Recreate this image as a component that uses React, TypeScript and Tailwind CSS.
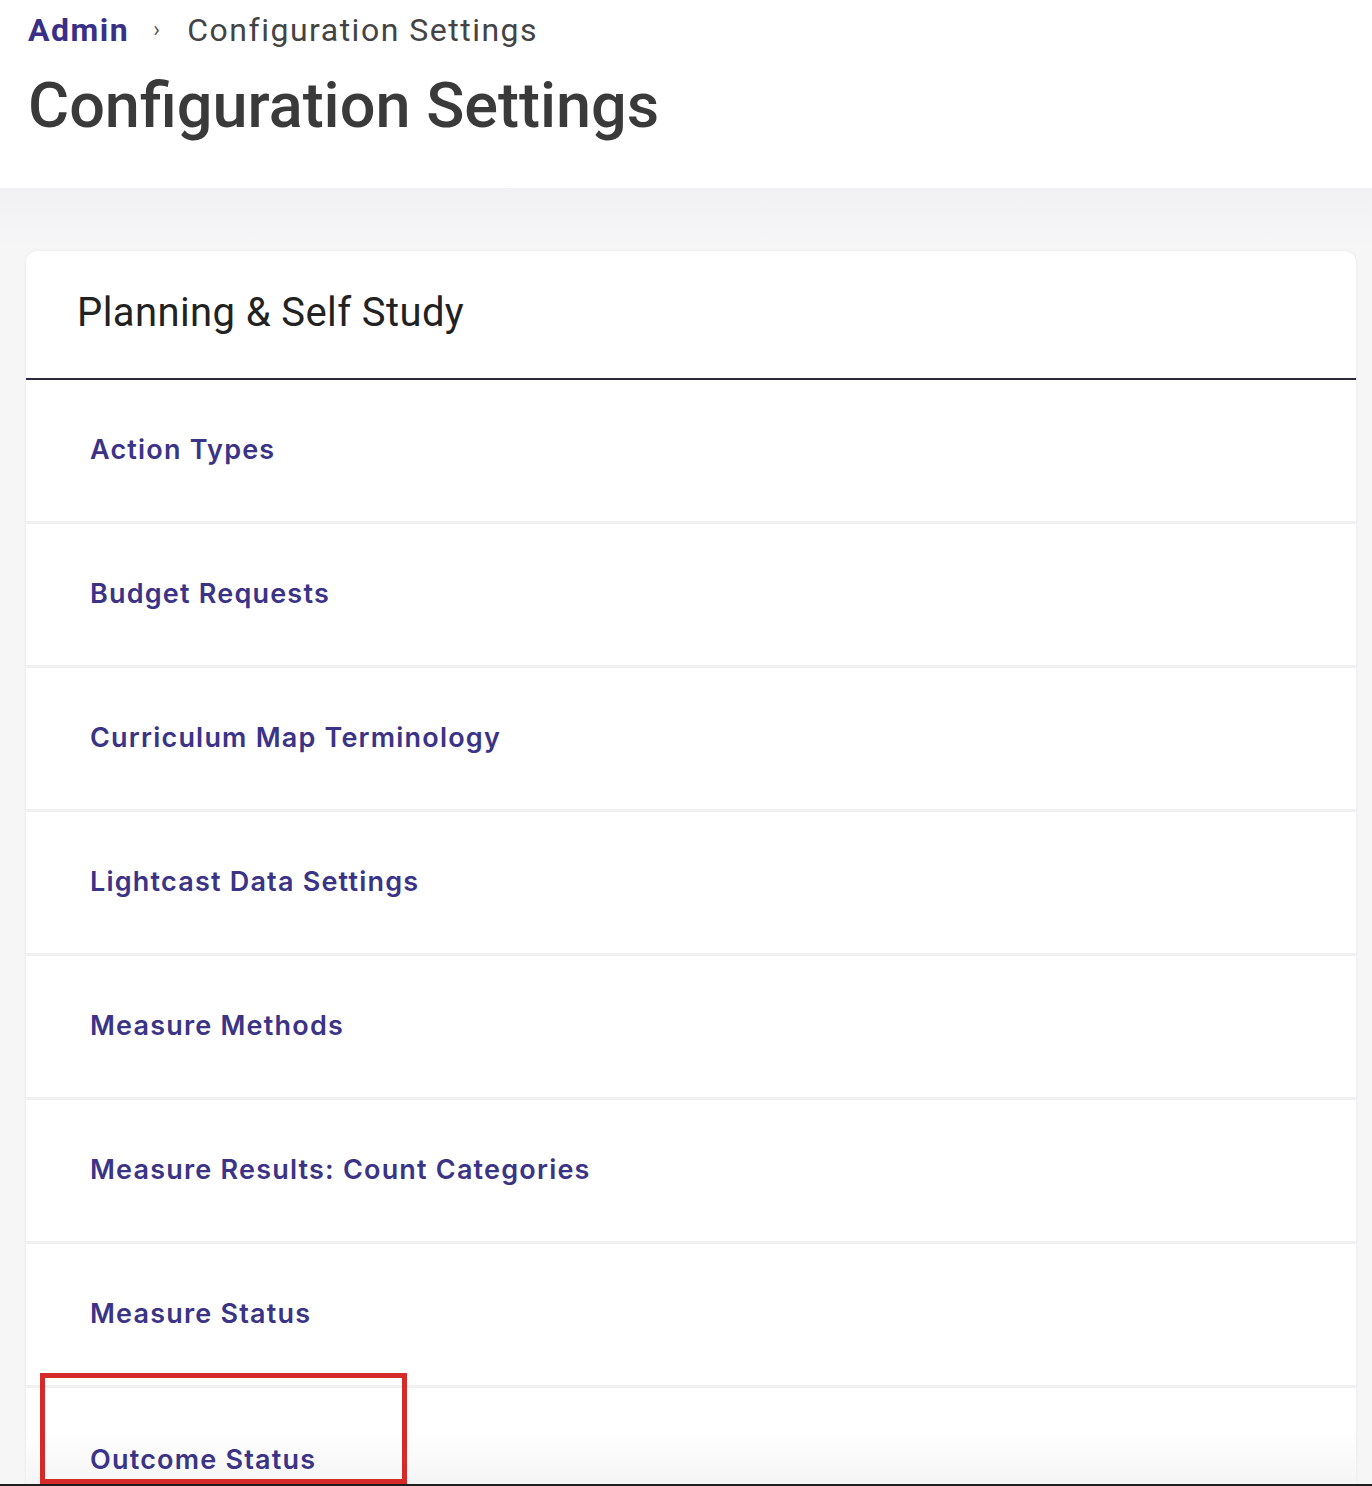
const items = [
  "Action Types",
  "Budget Requests",
  "Curriculum Map Terminology",
  "Lightcast Data Settings",
  "Measure Methods",
  "Measure Results: Count Categories",
  "Measure Status",
  "Outcome Status",
];

export default function App() {
  return (
    <div className="relative h-[1486px] overflow-hidden bg-[#f6f6f7] font-['Roboto',sans-serif]">
      {/* page header */}
      <header className="h-[188px] bg-white px-[28px] pt-[8px]">
        <nav className="flex items-center text-[32px] leading-[44px] tracking-[1.5px]">
          <a className="font-bold text-[#3a2f87]">Admin</a>
          <span className="ml-[24px] mr-[26px] text-[22px] text-[#555]">›</span>
          <span className="text-[#444]">Configuration Settings</span>
        </nav>
        <h1 className="mt-[14px] text-[63px] font-medium leading-[80px] text-[#3a3a3a]">
          Configuration Settings
        </h1>
      </header>

      {/* top shadow under the header */}
      <div className="h-[63px] bg-gradient-to-b from-[#f1f1f3] to-[#f6f6f7]" />

      <div className="pl-[26px] pr-[16px]">
        <section className="rounded-t-[12px] bg-white shadow-[0_0_4px_rgba(0,0,0,0.06)]">
          <div className="flex h-[129px] items-center border-b-2 border-[#2d2a3e] px-[51px] pb-[4px]">
            <h2 className="text-[40px] leading-none tracking-[0.4px] text-[#222]">
              Planning &amp; Self Study
            </h2>
          </div>
          <ul>
            {items.map((item, i) => (
              <li
                key={item}
                className={
                  i === items.length - 1
                    ? "flex h-[144px] items-center bg-gradient-to-b from-white from-30% to-[#ececec] px-[64px]"
                    : "flex h-[144px] items-center border-b-[3px] border-[#f1f1f4] px-[64px]"
                }
              >
                <a className="font-['Inter',sans-serif] text-[27px] font-semibold tracking-[1.2px] text-[#3b3486]">
                  {item}
                </a>
              </li>
            ))}
          </ul>
        </section>
      </div>

      {/* highlight box */}
      <div className="absolute left-[40px] top-[1373px] h-[111px] w-[367px] border-[5px] border-[#d42a2a]" />

      <div className="absolute bottom-0 left-0 right-0 h-[2px] bg-[#1e1e1e]" />
    </div>
  );
}
